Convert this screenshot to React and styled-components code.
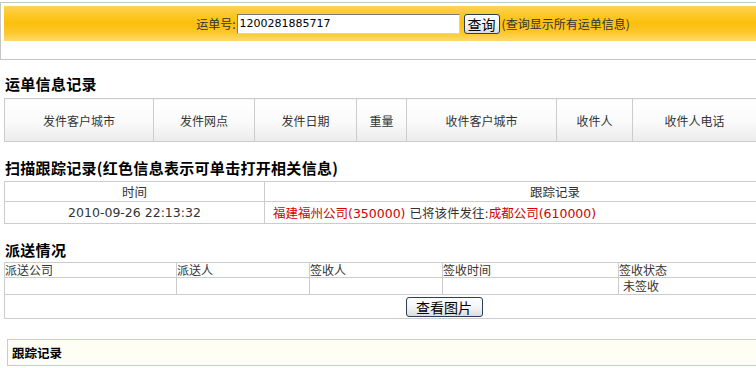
import React from "react";
import styled, { createGlobalStyle } from "styled-components";

const Global = createGlobalStyle`
  html, body { margin: 0; padding: 0; background: #fff; overflow: hidden; }
  body { font-family: "Noto Sans CJK SC", sans-serif; font-size: 12px; color: #333; }
`;

const Page = styled.div`
  width: 900px;
  padding-top: 2px;
`;

const TopPanel = styled.div`
  width: 840px;
  height: 58px;
  border: 1px solid #c6c6c6;
  padding: 3px 0 0 3px;
  box-sizing: border-box;
`;

const YellowBar = styled.div`
  width: 818px;
  height: 35px;
  background: linear-gradient(
    to bottom,
    #fed35a 0%,
    #fdc827 25%,
    #fbbf0c 50%,
    #fdc72a 75%,
    #ffda6d 100%
  );
  display: flex;
  align-items: center;
  justify-content: center;
  font-size: 12px;
  color: #333;
`;

const Label = styled.span`
  margin-right: 1px;
`;

const NumberInput = styled.input`
  width: 223px;
  height: 20px;
  box-sizing: border-box;
  border: 1px solid #7a7a7a;
  border-right-color: #d4d4d4;
  border-bottom-color: #d4d4d4;
  padding: 0 2px;
  font-family: "DejaVu Sans", sans-serif;
  font-size: 11px;
  color: #000;
  background: #fff;
  outline: none;
`;

const Button = styled.button`
  box-sizing: border-box;
  width: ${(p) => p.$w}px;
  height: ${(p) => p.$h}px;
  margin-left: ${(p) => p.$ml || 0}px;
  border: 1px solid #2c3e5a;
  border-radius: 3px;
  background: linear-gradient(to bottom, #ffffff 0%, #f4f4f4 55%, #dcdcdc 100%);
  font-family: "Noto Sans CJK SC", sans-serif;
  font-size: 14px;
  color: #000;
  padding: 0;
  line-height: 1;
  display: inline-flex;
  align-items: center;
  justify-content: center;
`;

const Hint = styled.span`
  margin-left: 2px;
`;

const Title = styled.div`
  font-family: "Noto Sans CJK SC", sans-serif;
  font-weight: 700;
  font-size: 15px;
  color: #000;
  height: ${(p) => p.$h}px;
  line-height: ${(p) => p.$h}px;
  margin-top: ${(p) => p.$mt}px;
  padding-left: 5px;
  letter-spacing: 0.3px;
`;

const Table = styled.table`
  border-collapse: collapse;
  width: ${(p) => p.$w}px;
  margin-left: 4px;
  margin-top: ${(p) => p.$mt || 0}px;
  table-layout: fixed;
  td, th {
    border: 1px solid #cccccc;
    padding: 0;
  }
`;

const HeadCell = styled.td`
  width: ${(p) => p.$w ? `${p.$w}px` : "auto"};
  height: 42px;
  text-align: center;
  font-size: 12px;
  color: #333;
  background: linear-gradient(to bottom, #ffffff 0%, #fbfbfb 50%, #ececec 100%);
`;

const TrackCell = styled.td`
  width: ${(p) => p.$w ? `${p.$w}px` : "auto"};
  height: ${(p) => p.$h}px;
  text-align: ${(p) => p.$align || "center"};
  padding-left: ${(p) => p.$pl || 0}px !important;
  font-family: "DejaVu Sans", "Noto Sans CJK SC", sans-serif;
  font-size: 12.5px;
  color: #333;
`;

const Red = styled.span`
  color: #d10000;
`;

const PlainCell = styled.td`
  width: ${(p) => p.$w ? `${p.$w}px` : "auto"};
  height: ${(p) => p.$h}px;
  text-align: ${(p) => p.$align || "left"};
  padding-left: ${(p) => p.$pl || 0}px !important;
  font-size: 12px;
  line-height: 14px;
  color: #333;
  vertical-align: middle;
`;

const TraceBox = styled.div`
  margin: 20px 0 0 7px;
  width: 880px;
  height: 27px;
  box-sizing: border-box;
  border: 1px solid #e8d355;
  background: #fffef4;
  display: flex;
  align-items: center;
  padding-left: 4px;
  font-weight: 700;
  font-size: 12.5px;
  color: #000;
`;

export default function App() {
  const headers = [
    ["发件客户城市", 148],
    ["发件网点", 100],
    ["发件日期", 101],
    ["重量", 49],
    ["收件客户城市", 149],
    ["收件人", 75],
    ["收件人电话", null],
  ];
  return (
    <>
      <Global />
      <Page>
        <TopPanel>
          <YellowBar>
            <Label>运单号:</Label>
            <NumberInput defaultValue="1200281885717" />
            <Button $w={36} $h={20} $ml={4}>查询</Button>
            <Hint>(查询显示所有运单信息)</Hint>
          </YellowBar>
        </TopPanel>

        <Title $h={22} $mt={13}>运单信息记录</Title>
        <Table $w={753} $mt={3}>
          <tbody>
            <tr>
              {headers.map(([t, w]) => (
                <HeadCell key={t} $w={w}>{t}</HeadCell>
              ))}
            </tr>
          </tbody>
        </Table>

        <Title $h={22} $mt={15}>扫描跟踪记录(红色信息表示可单击打开相关信息)</Title>
        <Table $w={842} $mt={2}>
          <tbody>
            <tr>
              <TrackCell $w={259} $h={19}>时间</TrackCell>
              <TrackCell $h={19}>跟踪记录</TrackCell>
            </tr>
            <tr>
              <TrackCell $w={259} $h={21}>2010-09-26 22:13:32</TrackCell>
              <TrackCell $h={21} $align="left" $pl={8}>
                <Red>福建福州公司(350000)</Red> 已将该件发往:<Red>成都公司(610000)</Red>
              </TrackCell>
            </tr>
          </tbody>
        </Table>

        <Title $h={22} $mt={15}>派送情况</Title>
        <Table $w={880} $mt={1}>
          <tbody>
            <tr>
              <PlainCell $w={171} $h={14}>派送公司</PlainCell>
              <PlainCell $w={132} $h={14}>派送人</PlainCell>
              <PlainCell $w={132} $h={14}>签收人</PlainCell>
              <PlainCell $w={175} $h={14}>签收时间</PlainCell>
              <PlainCell $h={14}>签收状态</PlainCell>
            </tr>
            <tr>
              <PlainCell $h={16}></PlainCell>
              <PlainCell $h={16}></PlainCell>
              <PlainCell $h={16}></PlainCell>
              <PlainCell $h={16}></PlainCell>
              <PlainCell $h={16} $pl={4}>未签收</PlainCell>
            </tr>
            <tr>
              <PlainCell colSpan={5} $h={23} $align="center">
                <Button $w={77} $h={20}>查看图片</Button>
              </PlainCell>
            </tr>
          </tbody>
        </Table>

        <TraceBox>跟踪记录</TraceBox>
      </Page>
    </>
  );
}
